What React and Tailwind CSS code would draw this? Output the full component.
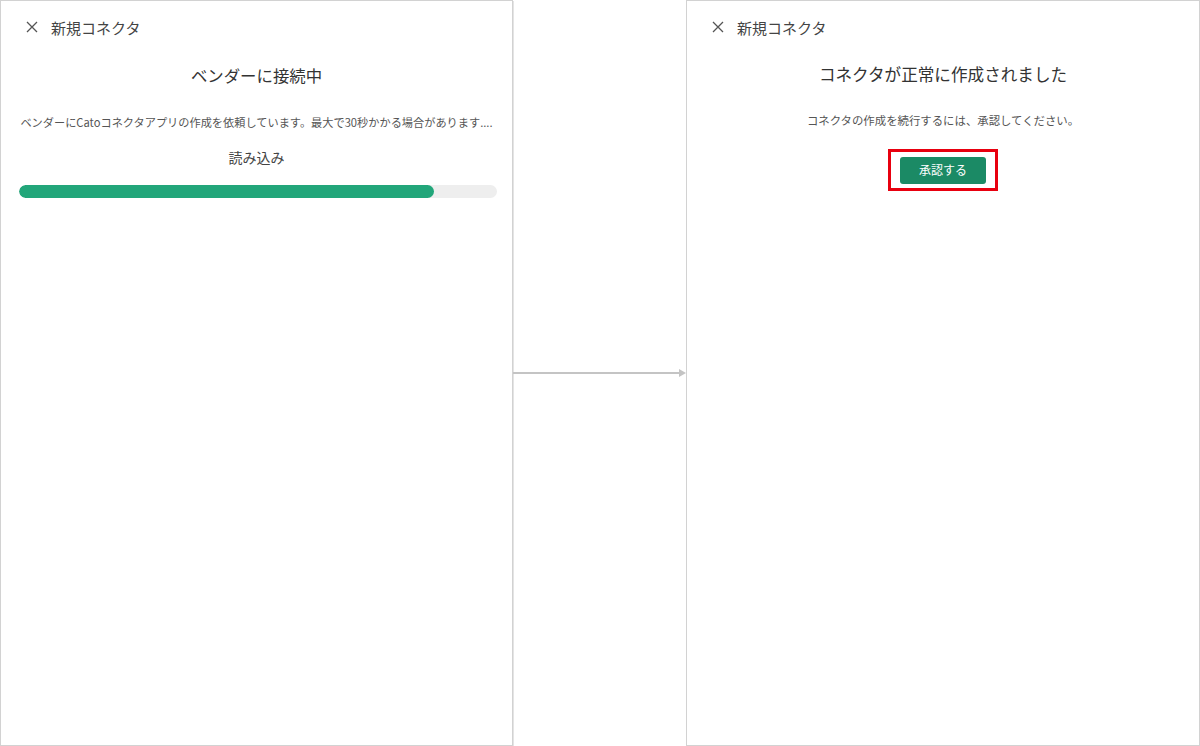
import React from "react";

const font = { fontFamily: '"Noto Sans CJK JP", "Noto Sans", sans-serif' };

const CloseIcon = () => (
  <svg width="12" height="12" viewBox="0 0 12 12" className="shrink-0">
    <path d="M1 1 L11 11 M11 1 L1 11" stroke="#555" strokeWidth="1.3" fill="none" />
  </svg>
);

const Header = () => (
  <div className="flex items-center h-[20px] mt-[16px] pl-[25px]">
    <CloseIcon />
    <span className="ml-[13px] text-[15px] text-[#444] leading-none">新規コネクタ</span>
  </div>
);

const Panel = ({ children, className = "" }) => (
  <div className={`h-[746px] bg-white border border-[#d2d2d2] shadow-[1px_1px_0_#e4e4e4] flex flex-col ${className}`}>
    {children}
  </div>
);

export default function App() {
  const progress = 86.8;
  return (
    <div className="w-[1200px] h-[746px] bg-white flex overflow-hidden" style={font}>
      <Panel className="w-[513px]">
        <Header />
        <h2 className="mt-[28px] text-center text-[16.4px] text-[#333] leading-[20px]">ベンダーに接続中</h2>
        <p className="mt-[29px] text-center text-[11.2px] text-[#555] leading-[16px] whitespace-nowrap">
          ベンダーにCatoコネクタアプリの作成を依頼しています。最大で30秒かかる場合があります....
        </p>
        <p className="mt-[18px] text-center text-[14px] text-[#444] leading-[18px]">読み込み</p>
        <div className="mt-[19px] ml-[18px] mr-[15px] h-[13px] rounded-full bg-[#eeeeee] overflow-hidden">
          <div className="h-full rounded-full bg-[#22a67a]" style={{ width: `${progress}%` }} />
        </div>
      </Panel>

      <div className="flex-1 flex items-center">
        <svg width="100%" height="10" viewBox="0 0 173 10" preserveAspectRatio="none">
          <line x1="0" y1="5" x2="167" y2="5" stroke="#c4c4c4" strokeWidth="2" />
          <path d="M166 1 L173 5 L166 9 Z" fill="#c4c4c4" />
        </svg>
      </div>

      <Panel className="w-[514px]">
        <Header />
        <h2 className="mt-[27px] text-center text-[16.6px] text-[#333] leading-[20px]">コネクタが正常に作成されました</h2>
        <p className="mt-[28px] text-center text-[11.4px] text-[#555] leading-[16px]">
          コネクタの作成を続行するには、承認してください。
        </p>
        <div className="mt-[21px] flex justify-center">
          <div className="border-[3px] border-[#e8000f] px-[9px] py-[4px]">
            <button className="w-[86px] h-[27px] rounded-[3px] bg-[#1b8a65] text-white text-[12px] leading-none">
              承認する
            </button>
          </div>
        </div>
      </Panel>
    </div>
  );
}
